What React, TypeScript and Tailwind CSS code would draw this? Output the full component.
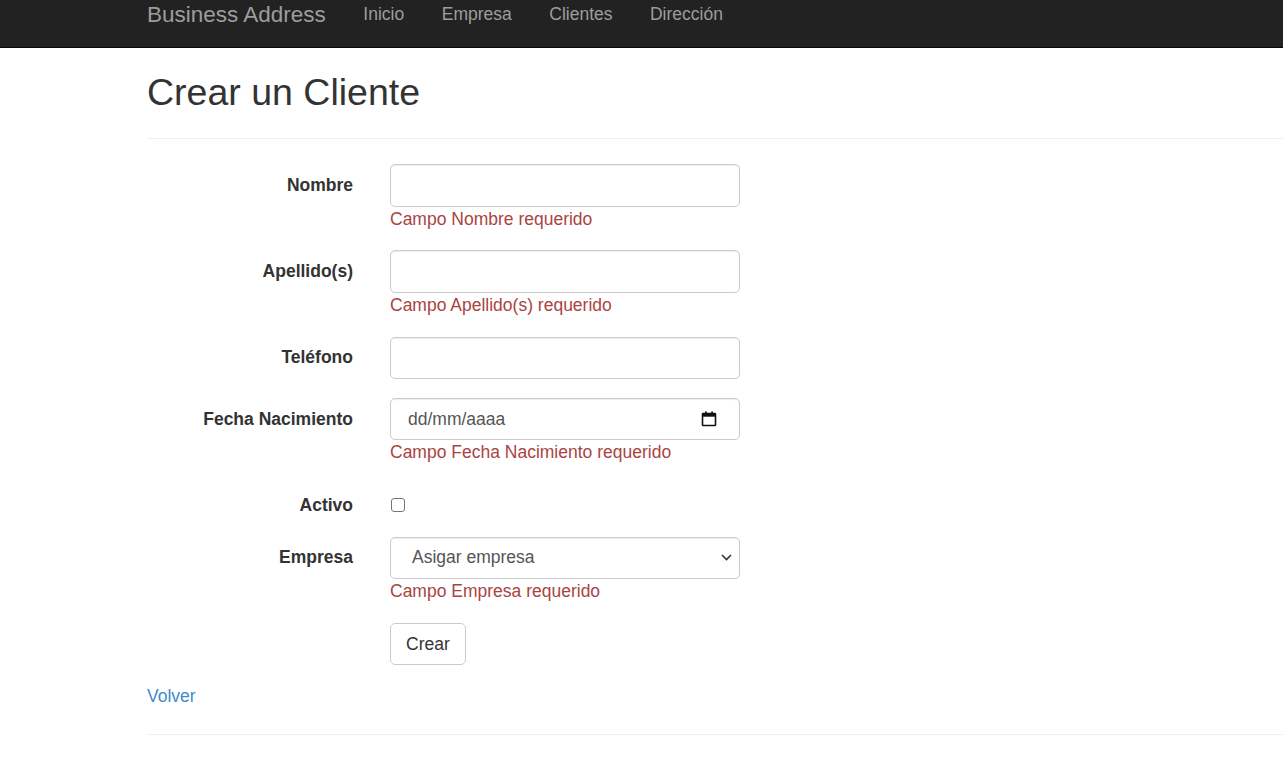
import React from 'react';

const NAV_LINKS = ['Inicio', 'Empresa', 'Clientes', 'Dirección'];

const inputCls =
  'block w-[350px] h-[42.5px] border border-[#ccc] rounded-[5px] bg-white px-[15px] text-[17.5px] text-[#555] shadow-[inset_0_1px_1px_rgba(0,0,0,0.075)] outline-none';

const Label = ({ children }: { children: React.ReactNode }) => (
  <div className="w-[206px] shrink-0 h-[42.5px] flex items-center justify-end font-bold">{children}</div>
);

const ErrorText = ({ children }: { children: React.ReactNode }) => (
  <div className="text-[#a94442] leading-[25px]">{children}</div>
);

const FormRow = ({ label, error, children }: { label?: string; error?: string; children: React.ReactNode }) => (
  <div className="flex gap-[37px] mb-[18.75px]">
    <Label>{label}</Label>
    <div className="w-[350px]">
      {children}
      {error && <ErrorText>{error}</ErrorText>}
    </div>
  </div>
);

const CalendarIcon = () => (
  <svg width="16" height="16" viewBox="0 0 16 16" fill="none">
    <rect x="1.5" y="2.5" width="13" height="12" rx="0.5" stroke="#111" strokeWidth="1.6" />
    <rect x="1.5" y="2.5" width="13" height="3.2" fill="#111" />
    <rect x="4" y="0.5" width="1.8" height="3" fill="#111" />
    <rect x="10.2" y="0.5" width="1.8" height="3" fill="#111" />
  </svg>
);

const Chevron = () => (
  <svg width="11" height="7" viewBox="0 0 11 7" fill="none">
    <path d="M1 1l4.5 4.5L10 1" stroke="#333" strokeWidth="1.6" />
  </svg>
);

export default function App() {
  return (
    <div className="min-h-screen bg-white font-['Liberation_Sans',Arial,Helvetica,sans-serif] text-[17.5px] leading-[25px] text-[#333]">
      {/* Navbar */}
      <nav className="h-[48px] bg-[#222] border-b border-[#080808] pl-[147px] pt-[2px]">
        <div className="flex items-start">
          <a className="text-[22.5px] leading-[25px] text-[#9d9d9d] pr-[18.75px]">Business Address</a>
          {NAV_LINKS.map((l) => (
            <a key={l} className="px-[18.75px] text-[#9d9d9d] leading-[25px]">
              {l}
            </a>
          ))}
        </div>
      </nav>

      <main className="pl-[147px]">
        <h2 className="mt-[24px] text-[37.5px] leading-[41.25px] font-normal">Crear un Cliente</h2>
        <hr className="mt-[24.75px] border-0 border-t border-[#eee]" />

        <form className="mt-[25px]" onSubmit={(e) => e.preventDefault()}>
          <FormRow label="Nombre" error="Campo Nombre requerido">
            <input type="text" className={inputCls} />
          </FormRow>
          <FormRow label="Apellido(s)" error="Campo Apellido(s) requerido">
            <input type="text" className={inputCls} />
          </FormRow>
          <FormRow label="Teléfono">
            <input type="text" className={inputCls} />
          </FormRow>
          <FormRow label="Fecha Nacimiento" error="Campo Fecha Nacimiento requerido">
            <div className={inputCls + ' flex items-center justify-between !pl-[17px] !pr-[22px]'}>
              <span className="text-[#555]">dd/mm/aaaa</span>
              <CalendarIcon />
            </div>
          </FormRow>

          {/* Activo */}
          <div className="flex gap-[37px] mb-[18.75px] h-[33.75px]">
            <div className="w-[206px] shrink-0 pt-[8.75px] text-right font-bold">Activo</div>
            <div className="pt-[14px]">
              <span className="block w-[14px] h-[14px] ml-px border border-[#767676] rounded-[3px] bg-white" />
            </div>
          </div>

          <FormRow label="Empresa" error="Campo Empresa requerido">
            <div className={inputCls + ' flex items-center justify-between !pl-[21px] !pr-[7px]'}>
              <span className="text-[#555]">Asigar empresa</span>
              <Chevron />
            </div>
          </FormRow>

          <div className="flex gap-[37px] mb-[18.75px]">
            <div className="w-[206px] shrink-0" />
            <button
              type="submit"
              className="h-[42.5px] px-[15px] border border-[#ccc] rounded-[5px] bg-white text-[#333] text-[17.5px]"
            >
              Crear
            </button>
          </div>
        </form>

        <a className="block text-[#428bca] leading-[25px]">Volver</a>
        <hr className="mt-[25px] border-0 border-t border-[#eee]" />
      </main>
    </div>
  );
}
